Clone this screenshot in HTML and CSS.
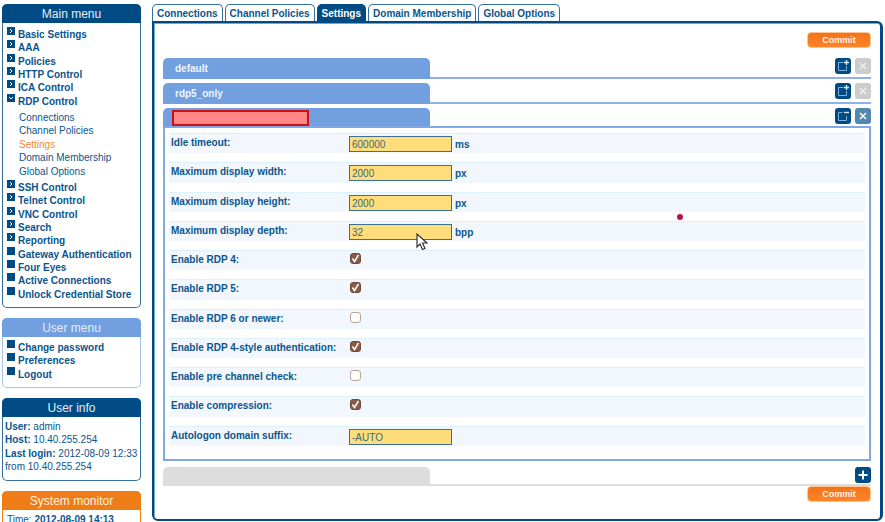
FILE: index.html
```html
<!DOCTYPE html>
<html lang="en">
<head>
<meta charset="utf-8">
<title>RDP Control - Settings</title>
<link rel="stylesheet" href="styles.css">
</head>
<body>
<svg class="sprites" aria-hidden="true">
  <symbol id="expand" viewBox="0 0 16 16"><path d="M8.500 4.500H3.500v8h8V8" fill="none" stroke="#7fb0d8"/><path d="M11.500 2v5M9 4.500h5" stroke="#d5e8f7" stroke-width="1.400"/></symbol>
  <symbol id="collapse" viewBox="0 0 16 16"><path d="M7.500 4.500H3.500v8h8V8" fill="none" stroke="#7fb0d8"/><path d="M9 4.500h5" stroke="#d5e8f7" stroke-width="1.400"/></symbol>
  <symbol id="cross" viewBox="0 0 16 16"><path d="M5 5l6 6M11 5l-6 6" stroke="currentColor" stroke-width="1.500"/></symbol>
  <symbol id="plus" viewBox="0 0 16 16"><path d="M8 3.500v9M3.500 8h9" stroke="#fff" stroke-width="2"/></symbol>
</svg>
<div class="layout">
  <aside class="sidebar">
    <nav class="box">
      <h2>Main menu</h2>
      <ul class="menu six">
        <li class="closed"><a href="#">Basic Settings</a></li>
        <li class="closed"><a href="#">AAA</a></li>
        <li class="closed"><a href="#">Policies</a></li>
        <li class="closed"><a href="#">HTTP Control</a></li>
        <li class="closed"><a href="#">ICA Control</a></li>
        <li class="open"><a href="#">RDP Control</a></li>
      </ul>
      <ul class="submenu">
        <li><a href="#">Connections</a></li>
        <li><a href="#">Channel Policies</a></li>
        <li><a href="#" class="current">Settings</a></li>
        <li><a href="#">Domain Membership</a></li>
        <li><a href="#">Global Options</a></li>
      </ul>
      <ul class="menu nine">
        <li class="closed"><a href="#">SSH Control</a></li>
        <li class="closed"><a href="#">Telnet Control</a></li>
        <li class="closed"><a href="#">VNC Control</a></li>
        <li class="closed"><a href="#">Search</a></li>
        <li class="closed"><a href="#">Reporting</a></li>
        <li><a href="#">Gateway Authentication</a></li>
        <li><a href="#">Four Eyes</a></li>
        <li><a href="#">Active Connections</a></li>
        <li><a href="#">Unlock Credential Store</a></li>
      </ul>
    </nav>
    <nav class="box light">
      <h2>User menu</h2>
      <ul class="menu three">
        <li><a href="#">Change password</a></li>
        <li><a href="#">Preferences</a></li>
        <li><a href="#">Logout</a></li>
      </ul>
    </nav>
    <section class="box">
      <h2>User info</h2>
      <div class="info">
        <p><b>User:</b> admin</p>
        <p><b>Host:</b> 10.40.255.254</p>
        <p><b>Last login:</b> 2012-08-09 12:33</p>
        <p>from 10.40.255.254</p>
      </div>
    </section>
    <section class="box orange">
      <h2>System monitor</h2>
      <div class="time"><p>Time: <b>2012-08-09 14:13</b></p></div>
    </section>
  </aside>
  <div class="content">
    <nav class="tabs">
      <a href="#">Connections</a>
      <a href="#">Channel Policies</a>
      <a href="#" class="active">Settings</a>
      <a href="#">Domain Membership</a>
      <a href="#">Global Options</a>
    </nav>
    <main>
      <form>
        <div class="actions"><button type="button" class="commit">Commit</button></div>
        <div class="policy">
          <div class="name">default</div>
          <button type="button" class="icon" aria-label="Expand"><svg><use href="#expand"/></svg></button>
          <button type="button" class="icon disabled" aria-label="Delete"><svg><use href="#cross"/></svg></button>
        </div>
        <div class="policy">
          <div class="name">rdp5_only</div>
          <button type="button" class="icon" aria-label="Expand"><svg><use href="#expand"/></svg></button>
          <button type="button" class="icon disabled" aria-label="Delete"><svg><use href="#cross"/></svg></button>
        </div>
        <div class="policy opened">
          <div class="name"><span class="redacted"></span></div>
          <button type="button" class="icon" aria-label="Collapse"><svg><use href="#collapse"/></svg></button>
          <button type="button" class="icon delete" aria-label="Delete"><svg><use href="#cross"/></svg></button>
        </div>
        <div class="panel">
          <div class="row"><label for="idle">Idle timeout:</label><input type="text" id="idle" value="600000"><span>ms</span></div>
          <div class="row"><label for="width">Maximum display width:</label><input type="text" id="width" value="2000"><span>px</span></div>
          <div class="row"><label for="height">Maximum display height:</label><input type="text" id="height" value="2000"><span>px</span></div>
          <div class="row"><label for="depth">Maximum display depth:</label><input type="text" id="depth" value="32"><span>bpp</span></div>
          <div class="row"><label for="rdp4">Enable RDP 4:</label><input type="checkbox" id="rdp4" checked></div>
          <div class="row"><label for="rdp5">Enable RDP 5:</label><input type="checkbox" id="rdp5" checked></div>
          <div class="row"><label for="rdp6">Enable RDP 6 or newer:</label><input type="checkbox" id="rdp6"></div>
          <div class="row"><label for="auth">Enable RDP 4-style authentication:</label><input type="checkbox" id="auth" checked></div>
          <div class="row"><label for="prechannel">Enable pre channel check:</label><input type="checkbox" id="prechannel"></div>
          <div class="row"><label for="compression">Enable compression:</label><input type="checkbox" id="compression" checked></div>
          <div class="row"><label for="suffix">Autologon domain suffix:</label><input type="text" id="suffix" value="-AUTO"></div>
        </div>
        <div class="policy blank">
          <div class="name"></div>
          <button type="button" class="icon" aria-label="Add"><svg><use href="#plus"/></svg></button>
        </div>
        <div class="actions"><button type="button" class="commit">Commit</button></div>
      </form>
    </main>
  </div>
</div>
<svg class="cursor" viewBox="0 0 12 18" aria-hidden="true"><path d="M1 1v13l3-3 2.500 5.500 2.500-1L6.500 10H11z" fill="#fff" stroke="#333" stroke-width="1.200"/></svg>
<span class="dot"></span>
</body>
</html>
```
FILE: styles.css
```css
:root {
  --navy: #004b84;
  --blue: #719fdf;
  --text: #0b558c;
  --orange: #ee7d18;
}
* { box-sizing: border-box; }
body {
  margin: 0;
  height: 100vh;
  overflow: hidden;
  position: relative;
  background: #fff;
  color: var(--text);
  font: 10px/13px "Liberation Sans", Arial, sans-serif;
}
h2, p, ul { margin: 0; padding: 0; }
ul { list-style: none; }
a { color: inherit; text-decoration: none; }
button { border: 0; padding: 0; font: inherit; }
.sprites { display: none; }

.layout {
  display: grid;
  grid-template-columns: 139px minmax(0, 1fr);
  gap: 11px;
  padding: 4px 2px 0;
}
.sidebar { display: flex; flex-direction: column; gap: 10px; }
.box {
  border: 1px solid #33709f;
  border-top: 0;
  border-radius: 5px;
}
.box h2 {
  margin: 0 -1px;
  padding: 3px 0 1px;
  border-radius: 5px 5px 0 0;
  background: var(--navy);
  color: #e4edf5;
  font-size: 12px;
  font-weight: normal;
  line-height: 15px;
  text-align: center;
}
.light { border-color: #a9c4ed; }
.light h2 { background: var(--blue); }
.orange { border-color: var(--orange); }
.orange h2 { background: var(--orange); color: #fff0df; }

.menu, .submenu { display: grid; grid-auto-rows: 1fr; }
.menu { padding-left: 4px; font-weight: bold; line-height: 11px; }
.menu li { display: flex; gap: 3px; }
.menu li::before {
  content: "";
  width: 8px;
  height: 8px;
  background: var(--navy) center / 8px 8px;
}
.menu a { padding-top: 2px; }
.menu .closed::before {
  background-image: url("data:image/svg+xml,%3Csvg xmlns='http://www.w3.org/2000/svg' viewBox='0 0 8 8'%3E%3Cpath d='M3 2l2 2-2 2' fill='none' stroke='white'/%3E%3C/svg%3E");
}
.menu .open::before {
  background-image: url("data:image/svg+xml,%3Csvg xmlns='http://www.w3.org/2000/svg' viewBox='0 0 8 8'%3E%3Cpath d='M2 3l2 2 2-2' fill='none' stroke='white'/%3E%3C/svg%3E");
}
.six { margin-top: 4px; min-height: 80px; }
.submenu { margin-top: 4px; padding-left: 16px; min-height: 67px; }
.submenu .current { color: #f28a2e; }
.nine { margin: 2px 0 7px; min-height: 120px; }
.three { margin: 3px 0 7px; min-height: 40px; }
.info { display: grid; grid-auto-rows: 1fr; min-height: 53px; margin: 3px 0 7px 2px; }
.info p, .time p { white-space: nowrap; }
.time { margin: 3px 0 4px 4px; }

.tabs { display: flex; gap: 2px; }
.tabs a {
  padding: 2px 4px;
  height: 17px;
  border: 1px solid #33709f;
  border-bottom: 0;
  border-radius: 5px 5px 0 0;
  font-weight: bold;
  white-space: nowrap;
}
.tabs .active { background: var(--navy); border-color: var(--navy); color: #fff; }
main {
  padding: 9px 9px 17px;
  border: 2px solid var(--navy);
  border-right-width: 3px;
  border-radius: 0 6px 6px 6px;
  box-shadow: inset 1px 1px 0 #79a5c6;
}
.actions { display: flex; justify-content: flex-end; }
.commit {
  width: 64px;
  height: 16px;
  border: 1px solid #ffc494;
  border-radius: 4px;
  background: linear-gradient(#f2741a, #ff8426);
  color: #fff3e8;
  font-size: 9px;
  font-weight: bold;
}
.policy {
  display: flex;
  gap: 4px;
  height: 21px;
  margin-bottom: 4px;
  border-bottom: 2px solid #8db1e8;
}
form > .actions:first-child { margin-bottom: 10px; }
.name {
  width: 267px;
  height: 21px;
  margin-right: auto;
  padding: 4px 12px;
  border-radius: 5px 5px 0 0;
  background: var(--blue);
  color: #f0f6ff;
  font-weight: bold;
}
.icon {
  width: 16px;
  height: 16px;
  border-radius: 3px;
  background: var(--navy);
}
.icon svg { display: block; width: 16px; height: 16px; }
.disabled { background: #ccc; color: #eee; }
.delete { background: #5287b0; color: #fff; }
.opened { height: 18px; margin-bottom: 0; border: 0; }
.opened .name { height: 18px; padding: 2px 9px 0; }
.redacted {
  display: block;
  width: 137px;
  height: 16px;
  border: 2px solid #cc1018;
  background: #ff8787;
}
.panel {
  display: grid;
  grid-auto-rows: 1fr;
  gap: 9px;
  min-height: 335px;
  padding: 5px 4px 13px;
  border: 2px solid #80a8e6;
}
.row {
  display: grid;
  grid-template-columns: 178px 102px 1fr;
  padding: 2px 2px 1px;
  border-top: 1px solid #dcf3fd;
  background: #f2f7fe;
  font-weight: bold;
}
.row label { white-space: nowrap; }
.row span { padding: 2px 0 0 4px; }
.row input { margin: 0; }
.row input[type="text"] {
  width: 103px;
  height: 16px;
  padding: 1px 2px 0;
  border: 1px solid #3c6f90;
  border-radius: 0;
  outline: 0;
  background: #ffdd7a;
  color: #3b6b78;
  font: 10px/13px "Liberation Sans", Arial, sans-serif;
}
.row input[type="checkbox"] {
  appearance: none;
  width: 11px;
  height: 11px;
  margin-left: 1px;
  border: 1px solid #b9a698;
  border-radius: 3px;
  background: #fff;
}
.row input[type="checkbox"]:checked {
  border-color: #6d4a3c;
  background: #8b5a47 url("data:image/svg+xml,%3Csvg xmlns='http://www.w3.org/2000/svg' viewBox='0 0 9 9'%3E%3Cpath d='M1.500 4.500l2 3L7.500 1' fill='none' stroke='white' stroke-width='1.500'/%3E%3C/svg%3E");
}
.blank { height: 19px; margin: 6px 0 0; border-color: #ddd; }
.blank .name { height: 19px; background: #ddd; }

.cursor { position: absolute; left: 416px; top: 233px; width: 12px; height: 18px; }
.dot {
  position: absolute;
  left: 677px;
  top: 214px;
  width: 6px;
  height: 6px;
  border-radius: 50%;
  background: #b5134f;
}
```
